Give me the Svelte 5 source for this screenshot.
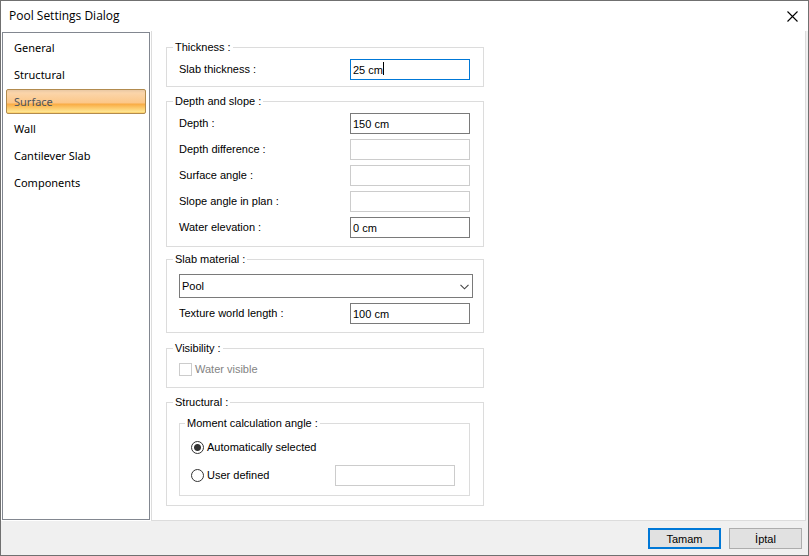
<script>
  const pages = ['General', 'Structural', 'Surface', 'Wall', 'Cantilever Slab', 'Components'];
  let current = $state('Surface');
  let thickness = $state('25 cm');
  let texture = $state('100 cm');
  let material = $state('Pool');
  let angleMode = $state('auto');
  let userAngle = $state('');
  let slopeFields = $state([
    { id: 'depth', label: 'Depth :', value: '150 cm', disabled: false },
    { id: 'difference', label: 'Depth difference :', value: '', disabled: true },
    { id: 'surface-angle', label: 'Surface angle :', value: '', disabled: true },
    { id: 'plan-angle', label: 'Slope angle in plan :', value: '', disabled: true },
    { id: 'elevation', label: 'Water elevation :', value: '0 cm', disabled: false }
  ]);
</script>

<div class="dialog">
  <header>
    <h1>Pool Settings Dialog</h1>
    <button class="close" type="button" aria-label="Close">
      <svg width="11" height="11" viewBox="0 0 11 11"><path d="M.5 .5 10.5 10.5M10.5 .5 .5 10.5" stroke="#000" stroke-width="1.1" fill="none" /></svg>
    </button>
  </header>

  <div class="body">
    <nav>
      {#each pages as page}
        <button type="button" class:active={page === current} onclick={() => (current = page)}>{page}</button>
      {/each}
    </nav>

    <main>
      <form>
        <fieldset>
          <legend>Thickness :</legend>
          <div class="row">
            <label for="thickness">Slab thickness :</label>
            <span class="edit">
              <input id="thickness" class="focused" type="text" bind:value={thickness} />
              <span class="caret-line" aria-hidden="true"><span class="measure">{thickness}</span></span>
            </span>
          </div>
        </fieldset>

        <fieldset class="roomy">
          <legend>Depth and slope :</legend>
          {#each slopeFields as field}
            <div class="row">
              <label for={field.id}>{field.label}</label>
              <input id={field.id} type="text" bind:value={field.value} disabled={field.disabled} />
            </div>
          {/each}
        </fieldset>

        <fieldset class="roomy material">
          <legend id="material-label">Slab material :</legend>
          <div class="combo">
            <select aria-labelledby="material-label" bind:value={material}>
              <option>Pool</option>
            </select>
            <svg width="9" height="6" viewBox="0 0 9 6"><path d="M.5 .8 4.5 4.8 8.5 .8" stroke="#444" stroke-width="1.1" fill="none" /></svg>
          </div>
          <div class="row">
            <label for="texture">Texture world length :</label>
            <input id="texture" type="text" bind:value={texture} />
          </div>
        </fieldset>

        <fieldset class="visibility">
          <legend>Visibility :</legend>
          <label class="choice disabled"><input type="checkbox" disabled />Water visible</label>
        </fieldset>

        <fieldset class="structural">
          <legend>Structural :</legend>
          <fieldset class="inner">
            <legend>Moment calculation angle :</legend>
            <div class="option">
              <label class="choice"><input type="radio" name="angle" value="auto" bind:group={angleMode} />Automatically selected</label>
            </div>
            <div class="option">
              <label class="choice"><input type="radio" name="angle" value="user" bind:group={angleMode} />User defined</label>
              <input type="text" aria-label="User defined angle" bind:value={userAngle} disabled={angleMode === 'auto'} />
            </div>
          </fieldset>
        </fieldset>
      </form>
    </main>
  </div>

  <footer>
    <button class="primary" type="button">Tamam</button>
    <button type="button">İptal</button>
  </footer>
</div>

<style>
  .dialog {
    box-sizing: border-box;
    min-height: 100vh;
    display: flex;
    flex-direction: column;
    border: 1px solid #707070;
    background: #f0f0f0;
    color: #000;
    font: 11px/13px "Liberation Sans", Arial, sans-serif;
  }
  button, input, select {
    box-sizing: border-box;
    margin: 0;
    font: inherit;
    color: inherit;
    border-radius: 0;
    outline: none;
  }
  header {
    height: 30px;
    display: flex;
    align-items: center;
    justify-content: space-between;
    padding: 0 10px 0 8px;
    background: #fff;
  }
  h1 {
    margin: 0;
    font: 400 12px/16px "Open Sans", "Noto Sans", sans-serif;
  }
  .close {
    display: flex;
    padding: 0;
    border: 0;
    background: none;
  }
  .body {
    flex: 1;
    display: flex;
    padding-right: 2px;
    background: linear-gradient(to left, #f0f0f0 2px, #fff 2px);
  }
  nav {
    box-sizing: border-box;
    width: 148px;
    flex: none;
    margin: 1px;
    padding: 2px 3px;
    display: flex;
    flex-direction: column;
    gap: 2px;
    border: 1px solid #828790;
    background: #fff;
  }
  nav button {
    height: 25px;
    padding: 0 7px;
    border: 1px solid transparent;
    border-radius: 2px;
    background: none;
    text-align: left;
    font: 11px/16px "Noto Sans", "Open Sans", sans-serif;
  }
  nav button.active {
    border-color: #b28b4e;
    color: #4c535c;
    background: linear-gradient(#e9c8a4 0, #fbd5aa 3px, #fcc788 13px, #f9ab43 14px, #fdd176 19px, #fee694 22px, #fcc34f 23px);
  }
  main {
    flex: 1;
    border: solid #dcdcdc;
    border-width: 0 1px 1px;
    padding: 10px 14px 14px;
  }
  form {
    max-width: 318px;
    display: flex;
    flex-direction: column;
    gap: 8px;
  }
  fieldset {
    min-width: 0;
    margin: 0;
    padding: 5px 10px 6px 12px;
    border: 1px solid #dcdcdc;
  }
  legend {
    margin-left: -6px;
    padding: 0 2px;
  }
  .roomy { padding-bottom: 8px; }
  .material { margin: -2px 0 1px; padding-top: 8px; }
  .visibility { padding: 8px 10px 11px 12px; }
  .structural { padding: 8px 13px 9px 12px; }
  .inner { padding: 7px 14px 9px 11px; }
  .row {
    display: flex;
    align-items: center;
    justify-content: space-between;
    padding-right: 3px;
  }
  .row + .row, .combo + .row { margin-top: 5px; }
  input[type="text"] {
    width: 120px;
    height: 21px;
    padding: 0 2px;
    border: 1px solid #7a7a7a;
    background: #fff;
  }
  input[type="text"]:disabled { border-color: #ccc; }
  input[type="text"].focused { border-color: #0078d7; caret-color: transparent; }
  .edit {
    position: relative;
    display: flex;
  }
  .caret-line {
    position: absolute;
    inset: 3px auto auto 3px;
    pointer-events: none;
    border-right: 1px solid #000;
    height: 13px;
  }
  .measure { visibility: hidden; white-space: pre; }
  .combo {
    position: relative;
    display: flex;
  }
  select {
    width: 100%;
    height: 24px;
    padding: 0 2px;
    border: 1px solid #7a7a7a;
    background: #fff;
    appearance: none;
  }
  .combo svg {
    position: absolute;
    right: 4px;
    top: 10px;
    pointer-events: none;
  }
  .choice {
    display: flex;
    align-items: center;
    gap: 3px;
  }
  .disabled { color: #838383; }
  .choice input {
    appearance: none;
    width: 13px;
    height: 13px;
    border: 1px solid #333;
    background: #fff;
  }
  .choice input:disabled { border-color: #ccc; }
  .choice input[type="radio"] { border-radius: 50%; }
  .choice input[type="radio"]:checked {
    background: radial-gradient(circle, #333 3px, #fff 4px);
  }
  .option {
    height: 21px;
    display: flex;
    align-items: center;
    justify-content: space-between;
  }
  .option + .option { margin-top: 7px; }
  footer {
    display: flex;
    justify-content: flex-end;
    gap: 8px;
    padding: 7px 6px 6px;
  }
  footer button {
    width: 73px;
    height: 21px;
    padding: 0;
    border: 1px solid #adadad;
    background: #e1e1e1;
    line-height: 16px;
  }
  footer .primary { border: 2px solid #0078d7; }
</style>
